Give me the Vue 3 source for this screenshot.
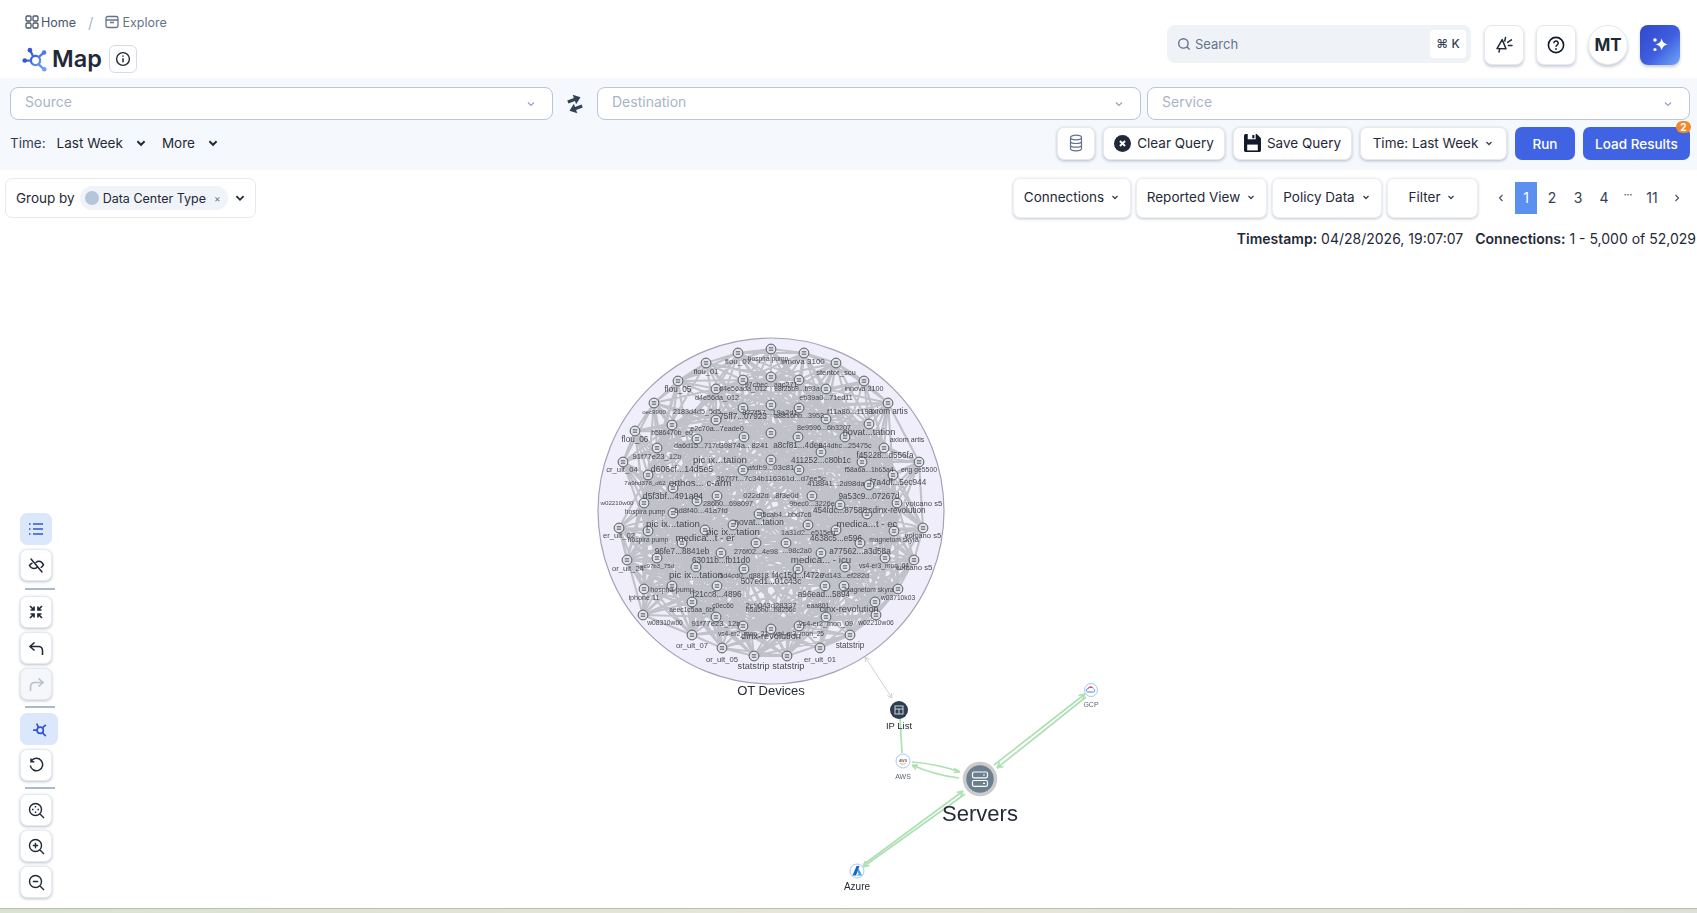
<script setup>
    // canvas coordinates: [x, y] of each device icon inside the OT Devices group
    const nodes = [
        [771,349],[738,353],[804,353],[706,363],[836,363],[771,377],[743,380],[799,380],[678,381],[864,381],
        [716,389],[826,389],[654,403],[888,403],[771,405],[743,408],[799,408],[716,420],[826,419],[635,431],
        [672,425],[869,424],[697,439],[845,437],[744,437],[771,433],[798,437],[657,448],[884,448],[821,452],
        [623,462],[919,462],[771,460],[743,470],[799,470],[862,462],[648,475],[893,475],[673,488],[869,485],
        [717,496],[812,496],[644,503],[697,501],[897,503],[840,505],[673,513],[759,514],[867,514],[619,528],
        [923,528],[648,531],[705,530],[733,525],[808,525],[836,530],[894,531],[682,543],[756,543],[786,543],
        [860,543],[721,553],[821,553],[657,558],[885,558],[627,560],[914,560],[696,567],[744,569],[798,569],
        [845,567],[672,586],[844,586],[717,586],[825,586],[644,589],[898,589],[692,602],[875,602],[643,615],
        [876,615],[716,617],[826,617],[743,626],[799,626],[771,629],[692,635],[850,635],[722,648],[820,648],
        [754,656],[787,656]
    ].map(([x, y]) => ({ x, y }));

    // [label, x, y, font size]
    const labels = [
        ['hospira pump',768,361,6.7],['flou_07',738,364,8],['innova 3100',803,364,8],['flou_01',706,374,7.7],
        ['stentor_scu',836,375,7.7],['flou_05',678,392,8.2],['d4e56ada_012',743,391,7.2],['e8f25b9...b93a',797,391,6.8],
        ['97cbec...aac271',771,387,7.2],['innova 3100',864,391,7.2],['d4e56da_012',717,400,7.2],['eb39a0...71ed11',826,400,7.2],
        ['oec9900',654,414,6.2],['2183d4d5_5d5',697,414,7.2],['877f57...19a2d1',770,415,7.7],['75ff7...07923',743,419,8.2],
        ['a8816bb...3953',799,418,7.2],['f11a80...1193',850,414,7.7],['axiom artis',888,414,8.2],['e2c70a...7eade0',717,431,7.2],
        ['b586470b_e0',672,435,6.8],['8e9596...6b3207',824,430,7.2],['novat...tation',869,435,9.2],['flou_06',635,442,8.2],
        ['da6d15...717d',697,448,7.2],['39874a...8241',744,448,7.7],['a8cf81...4dee',798,448,8.2],['844dbc...25475c',845,448,7.2],
        ['axiom artis',907,442,7.2],['91f77e23_12b',657,459,7.7],['pic ix...tation',720,463,9.7],['411252...c80b1c',821,463,8.2],
        ['f45228...d556fa',885,458,8.2],['cr_ult_04',622,472,7.7],['d606cf...14d5e5',682,472,8.7],['afdb9...03c81',771,470,7.7],
        ['f58a6a...1b65a4',869,472,6.8],['eng ge5500',919,472,6.8],['7a9bd378_d62',645,485,6.2],['orthos... c-arm',700,486,9.7],
        ['367f7f...7c34b116361d...d7ee5c',771,481,7.7],['418841...2d98da',836,486,7.7],['f7a4df...5ec944',898,485,8.2],['d5f3bf...491a04',673,499,8.7],
        ['022d2d...8f3e0d',771,498,7.7],['9a53c9...07267d',869,499,8.2],['w02210w00',617,505,6.2],['volcano s5',924,506,7.7],
        ['286b0...698097',728,506,7.2],['9bec0...3226e',812,506,7.2],['hospira pump',645,514,6.7],['6d8f40...41a7fd',701,513,7.7],
        ['f5cab4...bbd7c6',786,517,7.2],['454fdc...87588',840,513,8.2],['cdinx-revolution',897,513,8.2],['pic ix...tation',673,527,9.7],
        ['novat...tation',759,525,8.7],['medica...t - ec',867,527,9.7],['er_ult_02',619,538,7.7],['hospira pump',648,542,6.7],
        ['pic ix...tation',733,535,9.7],['1a31d2...e515eb',808,535,7.2],['medica...t - er',705,541,9.7],['4638c5...e596',836,541,8.2],
        ['magnetom skyra',894,542,6.7],['volcano s5',923,538,7.7],['96fe7...8841eb',682,554,8.2],['276f02...4e98',756,554,7.2],
        ['...98c2a0',797,553,7.2],['a77562...a3d58a',860,554,8.2],['or_ult_24',628,571,7.7],['ec97b3_75d',657,568,6.2],
        ['63011b...fb11d0',721,563,8.2],['medica... - icu',821,563,9.7],['vs4-er3_mon_04',884,568,6.7],['volcano s5',914,570,7.7],
        ['pic ix...tation',696,578,9.7],['5d4cd0...d8818',744,578,7.2],['f4c15d...f472e',798,578,8.2],['7d143...ef282d',845,578,7.2],
        ['507ed1...01c43c',771,584,8.2],['hospira pump',672,592,7.2],['magnetom skyra',869,592,6.7],['iphone 11',644,600,7.2],
        ['w03710k03',898,600,6.7],['f21cc8...4896',717,597,8.2],['a96ead...5894',824,597,8.2],['c0ec66',723,608,6.7],
        ['2c9043d28337',771,608,7.7],['eaa801',818,608,6.7],['aeec1c5aa_6bf',692,612,6.7],['b5a5b0...b8256c',771,612,6.7],
        ['cinx-revolution',849,612,9.2],['w08310w00',665,625,6.7],['w02210w06',876,625,6.7],['91f77e23_12b',716,626,7.7],
        ['vs4-er2_mon_09',826,626,7.2],['or_ult_07',692,648,7.7],['vs4-er2_mon_21',743,636,6.7],['vs4-er3_mon_25',799,636,6.7],
        ['dinx-revolution',771,639,9.2],['statstrip',850,648,8.2],['or_ult_05',722,662,7.7],['er_ult_01',820,662,7.7],
        ['statstrip statstrip',771,669,9.2]
    ].map(([text, x, y, size]) => ({ text, x, y, size }));

    // small seeded generator so the edge mesh is the same on every load
    let seed = 4711;
    function rnd() {
        seed = (seed * 16807) % 2147483647;
        return seed / 2147483647;
    }

    // rim nodes get fewer edges, the middle of the group is nearly solid
    let edgePath = '';
    nodes.forEach((from) => {
        const fromCentre = Math.hypot(from.x - 771, from.y - 511);
        const count = fromCentre > 130 ? 9 : 26;
        const near = nodes
            .map(to => ({ to, d: Math.hypot(to.x - from.x, to.y - from.y) + rnd() * 110 }))
            .sort((a, b) => a.d - b.d)
            .slice(1, count);
        near.forEach(({ to }) => {
            edgePath += `M${from.x} ${from.y}L${to.x} ${to.y}`;
        });
    });

    const topActions = [
        { name: 'Connections', width: 118 },
        { name: 'Reported View', width: 131 },
        { name: 'Policy Data', width: 110 },
        { name: 'Filter', width: 91 }
    ];
    const pages = ['2', '3', '4'];
</script>

<template>
    <div class="page">
        <header class="top">
            <div>
                <div class="crumbs">
                    <svg class="crumb-icon" viewBox="0 0 14 14"><g fill="none" stroke="#475569" stroke-width="1.3"><rect x="1" y="1" width="5" height="5" rx="1.2"/><rect x="8" y="1" width="5" height="5" rx="1.2"/><rect x="1" y="8" width="5" height="5" rx="1.2"/><rect x="8" y="8" width="5" height="5" rx="1.2"/></g></svg>
                    <span class="crumb-home">Home</span>
                    <span class="crumb-sep">/</span>
                    <svg class="crumb-icon" viewBox="0 0 14 14"><g fill="none" stroke="#64748b" stroke-width="1.3"><rect x="1" y="1.5" width="12" height="11" rx="1.8"/><path d="M1 5h12M5 7.5h4"/></g></svg>
                    <span class="crumb-link">Explore</span>
                </div>
                <div class="title-row">
                    <svg class="map-icon" viewBox="0 0 24 24">
                        <defs><linearGradient id="mapGrad" x1="0" y1="0" x2="1" y2="1"><stop offset="0" stop-color="#2f4fd8"/><stop offset="1" stop-color="#6d9cf5"/></linearGradient></defs>
                        <g fill="none" stroke="url(#mapGrad)" stroke-width="2.2"><circle cx="13" cy="13" r="4.4"/><path d="M10.8 9.2 8 3.6M16 9.8 21 5.4M15.8 16.4 21 21.4M8.6 13H3"/></g>
                        <circle cx="7.6" cy="3" r="2.2" fill="#3355dd"/><circle cx="21.2" cy="5.2" r="2.2" fill="#4f78e8"/><circle cx="21.4" cy="21.4" r="2.2" fill="#6d9cf5"/><circle cx="2.6" cy="13" r="2.2" fill="#3355dd"/>
                    </svg>
                    <h1>Map</h1>
                    <button class="info-btn">
                        <svg width="16" height="16" viewBox="0 0 16 16"><circle cx="8" cy="8" r="6.4" fill="none" stroke="#1f2937" stroke-width="1.4"/><path d="M8 7.2v4M8 4.6v1.2" stroke="#1f2937" stroke-width="1.5"/></svg>
                    </button>
                </div>
            </div>
            <div class="top-right">
                <div class="search">
                    <svg width="14" height="14" viewBox="0 0 14 14"><circle cx="6.4" cy="6.4" r="4.7" fill="none" stroke="#64748b" stroke-width="1.4"/><path d="M9.8 9.8l2.8 2.8" stroke="#64748b" stroke-width="1.4"/></svg>
                    <span class="search-text">Search</span>
                    <span class="kbd">⌘ K</span>
                </div>
                <button class="square-btn">
                    <svg width="20" height="20" viewBox="0 0 20 20"><g fill="none" stroke="#1f2937" stroke-width="1.5" stroke-linecap="round" stroke-linejoin="round"><path d="M8.2 4.6 3 13.6l9 .2z"/><path d="M5.6 14.4 5 17M11.5 2.6 10.8 6M17.4 4.8 13.6 7.4M18 10.4h-3.6"/></g></svg>
                </button>
                <button class="square-btn">
                    <svg width="18" height="18" viewBox="0 0 18 18"><circle cx="9" cy="9" r="7.6" fill="none" stroke="#111827" stroke-width="1.6"/><path d="M6.8 7.2a2.2 2.2 0 1 1 3.3 1.9c-.7.4-1.1.9-1.1 1.6" fill="none" stroke="#111827" stroke-width="1.5"/><circle cx="9" cy="13" r=".9" fill="#111827"/></svg>
                </button>
                <button class="avatar">MT</button>
                <button class="ai-btn">
                    <svg width="20" height="20" viewBox="0 0 18 18"><path d="M10.5 3c.7 3.400 2.100 4.800 5.500 5.500-3.400.7-4.800 2.100-5.500 5.500-.7-3.400-2.100-4.800-5.500-5.500 3.400-.7 4.800-2.100 5.500-5.500z" fill="#fff"/><circle cx="4.500" cy="4.500" r="1.600" fill="#fff"/><circle cx="4.500" cy="13" r="1.400" fill="#fff"/></svg>
                </button>
            </div>
        </header>

        <section class="query">
            <div class="selects">
                <div class="select">
                    <span>Source</span>
                    <svg class="chev-light" viewBox="0 0 10 10"><path d="M2 3.500l3 3 3-3" fill="none" stroke="#94a3b8" stroke-width="1.200"/></svg>
                </div>
                <svg class="swap" viewBox="0 0 20 20"><g fill="#334155" transform="rotate(-20 10 10)"><path d="M4 4h7V.5l6.500 5-6.500 5V7.200H4z"/><path d="M16 12.800H9V9.500l-6.500 5 6.500 5V16h7z"/></g></svg>
                <div class="select">
                    <span>Destination</span>
                    <svg class="chev-light" viewBox="0 0 10 10"><path d="M2 3.500l3 3 3-3" fill="none" stroke="#94a3b8" stroke-width="1.200"/></svg>
                </div>
                <div class="select">
                    <span>Service</span>
                    <svg class="chev-light" viewBox="0 0 10 10"><path d="M2 3.500l3 3 3-3" fill="none" stroke="#94a3b8" stroke-width="1.200"/></svg>
                </div>
            </div>
            <div class="query-row">
                <div class="time-row">
                    <span>Time:</span>
                    <span class="time-value">Last Week</span>
                    <svg class="chev" viewBox="0 0 10 10"><path d="M2 3.500l3 3 3-3" fill="none" stroke="#1f2937" stroke-width="1.600"/></svg>
                    <span class="time-more">More</span>
                    <svg class="chev" viewBox="0 0 10 10"><path d="M2 3.500l3 3 3-3" fill="none" stroke="#1f2937" stroke-width="1.600"/></svg>
                </div>
                <div class="query-actions">
                    <button class="btn btn-icon">
                        <svg width="16" height="18" viewBox="0 0 16 18"><g fill="none" stroke="#64748b" stroke-width="1.200"><ellipse cx="8" cy="3.500" rx="5.500" ry="2.300"/><path d="M2.500 3.500v11c0 1.300 2.500 2.300 5.500 2.300s5.500-1 5.500-2.300v-11M2.500 7.200c0 1.300 2.500 2.300 5.500 2.300s5.500-1 5.500-2.300M2.500 10.900c0 1.300 2.500 2.300 5.500 2.300s5.500-1 5.500-2.300"/></g></svg>
                    </button>
                    <button class="btn btn-clear">
                        <svg width="17" height="17" viewBox="0 0 16 16"><circle cx="8" cy="8" r="8" fill="#1f2937"/><path d="M5.600 5.600l4.800 4.800M10.400 5.600l-4.800 4.800" stroke="#fff" stroke-width="1.800"/></svg>
                        Clear Query
                    </button>
                    <button class="btn btn-save">
                        <svg width="17" height="18" viewBox="0 0 16 17"><path d="M0 1.500C0 .7.700 0 1.500 0H12l4 4v11.500c0 .8-.7 1.500-1.500 1.500h-13C.7 17 0 16.300 0 15.500z" fill="#111827"/><rect x="3.500" y="0" width="7.500" height="5" fill="#fff"/><rect x="7.800" y="1" width="2" height="3" fill="#111827"/><rect x="3" y="10" width="10" height="5.500" fill="#fff"/></svg>
                        Save Query
                    </button>
                    <button class="btn btn-time">
                        Time: Last Week
                        <svg class="chev-small" viewBox="0 0 10 10"><path d="M2.500 4l2.500 2.500L7.500 4" fill="none" stroke="#334155" stroke-width="1.300"/></svg>
                    </button>
                    <button class="btn-primary btn-run">Run</button>
                    <button class="btn-primary btn-load">
                        Load Results
                        <span class="badge">2</span>
                    </button>
                </div>
            </div>
        </section>

        <section class="controls">
            <div class="group-by">
                <span>Group by</span>
                <span class="chip"><i class="chip-dot"></i>Data Center Type<span class="chip-x">×</span></span>
                <svg class="chev" viewBox="0 0 10 10"><path d="M2 3.500l3 3 3-3" fill="none" stroke="#1f2937" stroke-width="1.500"/></svg>
            </div>
            <div class="control-right">
                <button v-for="item in topActions" :key="item.name" class="view-btn" :style="{ width: item.width + 'px' }">
                    {{ item.name }}
                    <svg class="chev-small" viewBox="0 0 10 10"><path d="M2.500 4l2.500 2.500L7.500 4" fill="none" stroke="#334155" stroke-width="1.300"/></svg>
                </button>
                <div class="pager">
                    <svg class="pager-arrow" viewBox="0 0 10 10"><path d="M6.500 2l-3 3 3 3" fill="none" stroke="#475569" stroke-width="1.200"/></svg>
                    <span class="page-num active">1</span>
                    <span v-for="p in pages" :key="p" class="page-num">{{ p }}</span>
                    <span class="page-dots">•••</span>
                    <span class="page-num">11</span>
                    <svg class="pager-arrow" viewBox="0 0 10 10"><path d="M3.500 2l3 3-3 3" fill="none" stroke="#475569" stroke-width="1.200"/></svg>
                </div>
            </div>
        </section>

        <div class="meta">
            <span><b>Timestamp:</b> 04/28/2026, 19:07:07</span>
            <span><b>Connections:</b> 1 - 5,000 of 52,029</span>
        </div>

        <!-- graph canvas: the svg uses full page coordinates -->
        <svg class="graph" width="1697" height="913" viewBox="0 0 1697 913">
            <circle cx="771" cy="511" r="173" fill="#f1eefb" stroke="#a5a2b8" stroke-width="1.200"/>
            <path :d="edgePath" fill="none" stroke="#c0c1c9" stroke-width="2.100"/>
            <g v-for="(n, i) in nodes" :key="i">
                <circle :cx="n.x" :cy="n.y" r="4.900" fill="#e2e3e7" stroke="#555b66" stroke-width="1"/>
                <path :d="`M${n.x - 2.200} ${n.y - 1.500}h4.400M${n.x - 2.200} ${n.y}h4.400M${n.x - 2.200} ${n.y + 1.500}h4.400`" stroke="#555b66" stroke-width=".7"/>
            </g>
            <text v-for="(l, i) in labels" :key="'l' + i" class="node-label" :x="l.x" :y="l.y" :font-size="l.size">{{ l.text }}</text>
            <text class="big-label" x="771" y="695" font-size="13">OT Devices</text>

            <g fill="none">
                <path d="M865 657 892 698M865 657l.5 5M865 657l4.500 2.500M892 698l-.5-5M892 698l-4.500-2.500" stroke="#cfd0d4" stroke-width="1"/>
                <g stroke="#aee0b3" stroke-width="1.700">
                    <path d="M900 718 902 753"/>
                    <path d="M912 762Q938 764 960 772M960 772l-6-3.500M960 772l-6.500 .5"/>
                    <path d="M959 778Q934 775 912 765M912 765l6 .2M912 765l4 4.500"/>
                    <path d="M994 765 1085 694M1085 694l-6.500 1.500M1085 694l-2.500 6"/>
                    <path d="M1086 697 997 768M997 768l6.500-1.500M997 768l2.500-6"/>
                    <path d="M963 791 863 865M963 791l-6.500 1.500M963 791l-2.500 6"/>
                    <path d="M965 794 863 867M863 867l6.500-1.500M863 867l2.500-6"/>
                </g>
            </g>

            <circle cx="899" cy="710" r="9" fill="#2e3d4f"/>
            <g fill="none" stroke="#dfe4ea" stroke-width=".9"><rect x="895" y="706" width="8" height="8"/><path d="M895 709h8M899 709v5"/></g>
            <text class="big-label" x="899" y="729" font-size="9.500">IP List</text>

            <circle cx="903" cy="761" r="7" fill="#fff" stroke="#a9c5f5" stroke-width="1"/>
            <text class="aws-mark" x="903" y="761.500" font-size="3.500">AWS</text>
            <path d="M900 763.500q3 1.500 6 0" fill="none" stroke="#f0a23a" stroke-width=".8"/>
            <text class="small-label" x="903" y="779" font-size="7">AWS</text>

            <circle cx="980" cy="779" r="15.500" fill="#6b7f8f" stroke="#cbcbcb" stroke-width="3.500"/>
            <g fill="none" stroke="#fff" stroke-width="1.200"><rect x="972.500" y="772" width="15" height="5.800" rx="1.500"/><rect x="972.500" y="780.500" width="15" height="5.800" rx="1.500"/><path d="M983 775h2M983 783.400h2"/></g>
            <text class="big-label" x="980" y="821" font-size="22">Servers</text>

            <circle cx="1091" cy="690" r="6.500" fill="#fff" stroke="#a9c5f5" stroke-width="1"/>
            <path d="M1087.500 692a1.800 1.800 0 0 1 .3-3.400 3.300 3.300 0 0 1 6 .4 1.600 1.600 0 0 1-.3 3z" fill="none" stroke="#4285f4" stroke-width="1"/>
            <path d="M1088 688.500a3.300 3.300 0 0 1 4.500-.8" fill="none" stroke="#ea4335" stroke-width="1"/>
            <path d="M1092.700 687.700a3 3 0 0 1 1.200 1.300" fill="none" stroke="#fbbc05" stroke-width="1"/>
            <text class="small-label" x="1091" y="707" font-size="7">GCP</text>

            <circle cx="857" cy="871" r="7" fill="#fff" stroke="#a9c5f5" stroke-width="1"/>
            <path d="M852.500 875.500 856.500 866h3l-3.500 9.500z" fill="#1368bd"/><path d="M858.500 868.500 862 875.500h-6l2.800-1.200-1.500-3z" fill="#36a2e8"/>
            <text class="big-label" x="857" y="890" font-size="10">Azure</text>
        </svg>

        <div class="toolbar">
            <button class="tool tool-active">
                <svg width="16" height="16" viewBox="0 0 16 16"><path d="M5 3h10M5 8h10M5 13h10M1 3h1.500M1 8h1.500M1 13h1.500" stroke="#3355cc" stroke-width="1.500"/></svg>
            </button>
            <button class="tool">
                <svg width="17" height="17" viewBox="0 0 17 17"><g fill="none" stroke="#1f2937" stroke-width="1.500" stroke-linecap="round"><path d="M4 6.200C2.600 7 1.500 8.500 1.500 8.500s1.700 3 4.500 3c1.300 0 2.700-.5 3.500-1.500M8 5.500c1-1 2-1.200 3-1.200 2.800 0 4.500 3.500 4.500 3.500s-.9 1.500-2.300 2.500"/><path d="M3 2 14 15"/></g></svg>
            </button>
            <hr class="tool-line">
            <button class="tool">
                <svg width="16" height="16" viewBox="0 0 16 16"><g fill="none" stroke="#1f2937" stroke-width="1.700"><path d="M2 2l4 4M6 2.500V6H2.500M14 2l-4 4M10 2.500V6h3.500M2 14l4-4M6 13.500V10H2.500M14 14l-4-4M10 13.500V10h3.500"/></g></svg>
            </button>
            <button class="tool">
                <svg width="17" height="17" viewBox="0 0 17 17"><path d="M6.500 2.500 2 6.500l4.500 4M2 6.500h8.500a4 4 0 0 1 4 4V15" fill="none" stroke="#1f2937" stroke-width="1.600"/></svg>
            </button>
            <button class="tool tool-disabled">
                <svg width="17" height="17" viewBox="0 0 17 17"><path d="M10.500 2.500l4.500 4-4.500 4M15 6.500H6.500a4 4 0 0 0-4 4V15" fill="none" stroke="#b8c0ca" stroke-width="1.600"/></svg>
            </button>
            <hr class="tool-line tool-line-mid">
            <button class="tool tool-active tool-wide">
                <svg width="17" height="17" viewBox="0 0 24 24"><g fill="none" stroke="#3355cc" stroke-width="2.400"><circle cx="13" cy="13" r="4.400"/><path d="M10.800 9.200 8 3.600M16 9.800 21 5.400M15.800 16.400 21 21.400M8.600 13H3"/></g></svg>
            </button>
            <button class="tool">
                <svg width="17" height="17" viewBox="0 0 17 17"><path d="M3.200 4.200A6.200 6.200 0 1 1 2.300 8.500M3 1.500v3.300h3.300" fill="none" stroke="#1f2937" stroke-width="1.500"/></svg>
            </button>
            <hr class="tool-line tool-line-last">
            <button class="tool">
                <svg width="17" height="17" viewBox="0 0 17 17"><g fill="none" stroke="#1f2937" stroke-width="1.400"><circle cx="7.500" cy="7.500" r="6"/><path d="M12 12l4 4M7.500 4v1.500M7.500 9.500V11M4 7.500h1.500M9.500 7.500H11"/></g></svg>
            </button>
            <button class="tool">
                <svg width="17" height="17" viewBox="0 0 17 17"><g fill="none" stroke="#1f2937" stroke-width="1.400"><circle cx="7.500" cy="7.500" r="6"/><path d="M12 12l4 4M7.500 4.800v5.400M4.800 7.500h5.400"/></g></svg>
            </button>
            <button class="tool">
                <svg width="17" height="17" viewBox="0 0 17 17"><g fill="none" stroke="#1f2937" stroke-width="1.400"><circle cx="7.500" cy="7.500" r="6"/><path d="M12 12l4 4M4.800 7.500h5.400"/></g></svg>
            </button>
        </div>
        <div class="foot-strip"></div>
    </div>
</template>

<style>
html, body { margin: 0; background: #fff; }
</style>

<style scoped>
.page {
    position: relative;
    width: 1697px;
    height: 913px;
    overflow: hidden;
    background: #fff;
    font-family: Inter, "Liberation Sans", sans-serif;
    color: #1f2937;
    font-size: 13.5px;
}

button {
    font-family: inherit;
    font-size: 13.5px;
    color: #1f2937;
    cursor: pointer;
}

.top {
    height: 78px;
    box-sizing: border-box;
    display: flex;
    justify-content: space-between;
    padding: 0 17px 0 22px;
}

.crumbs {
    display: flex;
    align-items: center;
    height: 14px;
    margin-top: 15px;
    padding-left: 3px;
    font-size: 12.5px;
}

.crumb-icon {
    width: 14px;
    height: 14px;
}

.crumb-home {
    margin-left: 2px;
    color: #475569;
}

.crumb-sep {
    margin: 0 12px 0 12px;
    color: #a9b8cc;
    font-size: 15px;
}

.crumb-link {
    margin-left: 3px;
    color: #64748b;
}

.title-row {
    display: flex;
    align-items: center;
    margin-top: 16px;
}

.map-icon {
    width: 25px;
    height: 25px;
}

h1 {
    margin: 0 7px 0 5px;
    font-size: 23.5px;
    line-height: 28px;
    font-weight: 600;
    color: #1f2937;
}

.info-btn {
    width: 28px;
    height: 28px;
    padding: 0;
    display: flex;
    align-items: center;
    justify-content: center;
    background: #fff;
    border: 1px solid #d7dbe1;
    border-radius: 6px;
}

.top-right {
    display: flex;
    align-items: flex-start;
    padding-top: 25px;
    gap: 12px;
}

.search {
    width: 304px;
    height: 38px;
    box-sizing: border-box;
    display: flex;
    align-items: center;
    padding: 0 5px 0 10px;
    margin-right: 1px;
    background: #eff2f6;
    border-radius: 8px;
}

.search-text {
    flex: 1;
    margin-left: 4px;
    color: #64748b;
    font-size: 13px;
}

.kbd {
    width: 36px;
    height: 28px;
    line-height: 28px;
    text-align: center;
    background: #fff;
    border-radius: 4px;
    font-size: 12px;
    font-weight: 500;
    color: #334155;
}

.square-btn, .avatar, .ai-btn {
    width: 40px;
    height: 40px;
    padding: 0;
    display: flex;
    align-items: center;
    justify-content: center;
    background: #fff;
    border: 1px solid #e6e9ee;
    border-radius: 8px;
    box-shadow: 0 2px 3px rgba(100, 116, 139, .35);
}

.avatar {
    border-radius: 50%;
    font-size: 17px;
    font-weight: 700;
    color: #1f2937;
}

.ai-btn {
    border: none;
    background: linear-gradient(135deg, #3048c8 0%, #3f5fe0 55%, #72a6f8 100%);
}

.query {
    height: 92px;
    box-sizing: border-box;
    padding: 9px 7px 0 10px;
    background: #f5f8fc;
}

.selects {
    display: flex;
    align-items: center;
}

.select {
    flex: 1;
    height: 33px;
    box-sizing: border-box;
    display: flex;
    justify-content: space-between;
    align-items: center;
    padding: 0 16px 4px 14px;
    background: #fff;
    border: 1px solid #b8c6d8;
    border-radius: 8px;
    color: #a9b5c5;
    font-size: 14px;
}

.select:first-child {
    flex: 0 0 543px;
}

.select:nth-child(3) {
    flex: 0 0 544px;
    margin-right: 6px;
}

.chev-light {
    width: 10px;
    height: 10px;
    margin-top: 4px;
}

.swap {
    width: 20px;
    height: 20px;
    margin: 0 12px 0 12px;
}

.query-row {
    display: flex;
    justify-content: space-between;
    align-items: center;
    margin-top: 7px;
}

.time-row {
    display: flex;
    align-items: center;
    padding-bottom: 2px;
    color: #334155;
}

.time-value {
    margin-left: 11px;
    color: #1f2937;
}

.time-more {
    margin-left: 15px;
    color: #1f2937;
}

.chev {
    width: 12px;
    height: 12px;
    margin-left: 12px;
    flex: none;
}

.query-actions {
    display: flex;
    gap: 8px;
}

.btn {
    height: 33px;
    display: flex;
    align-items: center;
    justify-content: center;
    gap: 6px;
    padding: 0 0 1px;
    background: #fff;
    border: 1px solid #e6e9ee;
    border-radius: 7px;
    box-shadow: 0 1px 3px rgba(100, 116, 139, .45);
}

.btn-icon {
    width: 38px;
}

.btn-clear {
    width: 122px;
}

.btn-save {
    width: 119px;
}

.btn-time {
    width: 147px;
}

.chev-small {
    width: 10px;
    height: 10px;
    flex: none;
}

.btn-primary {
    position: relative;
    height: 33px;
    padding: 0;
    background: #3f63e3;
    border: none;
    border-radius: 7px;
    color: #fff;
    font-weight: 500;
}

.btn-run {
    width: 60px;
}

.btn-load {
    width: 107px;
}

.badge {
    position: absolute;
    top: -6px;
    right: -1px;
    width: 15px;
    height: 12px;
    border-radius: 8px;
    background: #f08a2c;
    color: #fff;
    font-size: 10px;
    line-height: 12px;
    font-weight: 700;
}

.controls {
    height: 57px;
    box-sizing: border-box;
    display: flex;
    justify-content: space-between;
    padding: 8px 15px 0 5px;
}

.group-by {
    width: 251px;
    height: 40px;
    box-sizing: border-box;
    display: flex;
    align-items: center;
    padding-left: 10px;
    border: 1px solid #e6e9ee;
    border-radius: 7px;
    white-space: nowrap;
}

.chip {
    display: flex;
    align-items: center;
    height: 24px;
    margin-left: 5px;
    padding: 0 7px 0 5px;
    background: #f0f3f7;
    border-radius: 12px;
    font-size: 12.5px;
}

.chip-dot {
    width: 14px;
    height: 14px;
    margin-right: 4px;
    border-radius: 50%;
    background: #b6c6da;
}

.chip-x {
    margin-left: 8px;
    color: #64748b;
    font-size: 10px;
}

.group-by .chev {
    margin-left: 6px;
}

.control-right {
    display: flex;
    align-items: flex-start;
    gap: 5px;
}

.view-btn {
    height: 40px;
    box-sizing: border-box;
    display: flex;
    align-items: center;
    justify-content: center;
    gap: 6px;
    padding: 0 0 2px;
    background: #fff;
    border: 1px solid #eceff3;
    border-radius: 7px;
    box-shadow: 0 1px 3px rgba(100, 116, 139, .4);
}

.pager {
    display: flex;
    align-items: center;
    height: 32px;
    margin: 4px 0 0 13px;
    font-size: 14px;
}

.pager-arrow {
    width: 10px;
    height: 10px;
}

.page-num {
    min-width: 22px;
    height: 32px;
    line-height: 32px;
    margin-left: 4px;
    text-align: center;
    color: #334155;
}

.page-num.active {
    margin-left: 9px;
    background: #5b8ff0;
    color: #fff;
}

.page-dots {
    width: 18px;
    margin-left: 4px;
    text-align: center;
    font-size: 5px;
    line-height: 18px;
    height: 26px;
    color: #475569;
}

.pager-arrow:last-child {
    margin-left: 9px;
}

.meta {
    display: flex;
    justify-content: flex-end;
    gap: 12px;
    height: 18px;
    margin: 3px 1px 0 0;
    font-size: 14px;
    line-height: 18px;
    color: #1f2937;
}

b {
    font-weight: 600;
}

.graph {
    position: absolute;
    top: 0;
    left: 0;
    pointer-events: none;
    filter: blur(.3px);
}

.node-label {
    font-family: "Liberation Sans", sans-serif;
    fill: #47494f;
    text-anchor: middle;
}

.big-label {
    font-family: "Liberation Sans", sans-serif;
    fill: #262c36;
    text-anchor: middle;
}

.small-label {
    font-family: "Liberation Sans", sans-serif;
    fill: #5f6670;
    text-anchor: middle;
}

.aws-mark {
    font-family: "Liberation Sans", sans-serif;
    font-weight: 700;
    fill: #666;
    text-anchor: middle;
}

.toolbar {
    position: absolute;
    left: 20px;
    top: 513px;
    display: flex;
    flex-direction: column;
    align-items: flex-start;
    gap: 4px;
}

.tool {
    width: 32px;
    height: 32px;
    padding: 0;
    display: flex;
    align-items: center;
    justify-content: center;
    background: #fff;
    border: 1px solid #e6e9ee;
    border-radius: 7px;
    box-shadow: 0 1px 3px rgba(100, 116, 139, .45);
}

.tool-active {
    background: #dbe8fb;
    border-color: #dbe8fb;
    box-shadow: none;
}

.tool-wide {
    width: 38px;
}

.tool-disabled {
    background: #f5f7fa;
}

.tool-line {
    width: 30px;
    height: 2px;
    margin: 2.5px 0 2.5px 5px;
    border: none;
    background: #a9b8cc;
}

.tool-line-mid {
    margin: 1.5px 0 1.5px 5px;
}

.tool-line-last {
    margin: 1.5px 0 1.5px 5px;
}

.foot-strip {
    position: absolute;
    left: 0;
    right: 0;
    bottom: 0;
    height: 4px;
    background: linear-gradient(90deg, #d9e2d0, #e8e6d8 50%, #dde0d8);
    border-top: 1px solid #b8c0a8;
}
</style>
